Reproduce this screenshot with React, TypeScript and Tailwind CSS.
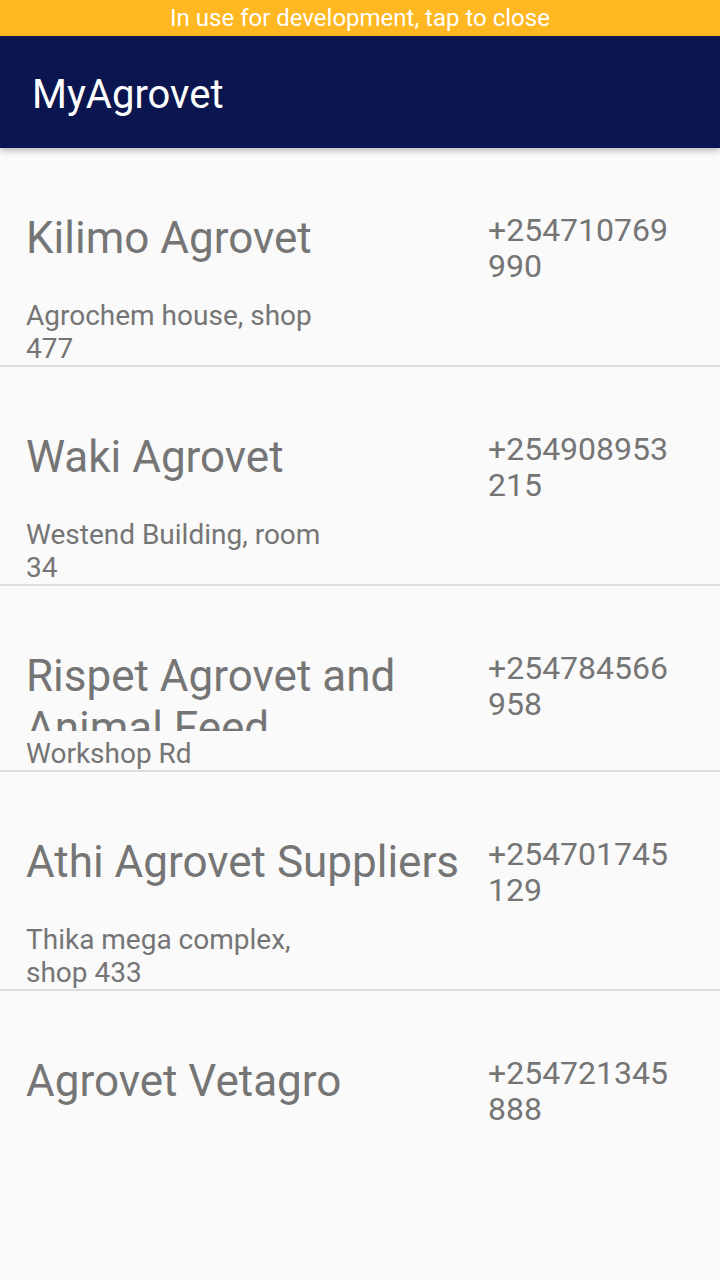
import React from 'react'

type Agrovet = {
  name: string
  address: string
  phone: string
}

const agrovets: Agrovet[] = [
  { name: 'Kilimo Agrovet', address: 'Agrochem house, shop 477', phone: '+254710769990' },
  { name: 'Waki Agrovet', address: 'Westend Building, room 34', phone: '+254908953215' },
  { name: 'Rispet Agrovet and Animal Feed', address: 'Workshop Rd', phone: '+254784566958' },
  { name: 'Athi Agrovet Suppliers', address: 'Thika mega complex, shop 433', phone: '+254701745129' },
  { name: 'Agrovet Vetagro', address: '', phone: '+254721345888' },
]

const AgrovetRow = ({ item, last }: { item: Agrovet; last: boolean }) => {
  return (
    <li
      className={
        last
          ? 'flex flex-row pt-[64px] text-[#757575]'
          : 'flex flex-row border-b-2 border-[#dedede] pt-[64px] text-[#757575]'
      }
    >
      <div className="flex flex-col w-[488px] pl-[26px]">
        <p className="h-[81px] overflow-hidden text-[44px] leading-[52px]">{item.name}</p>
        {item.address && (
          <p className="w-[310px] mt-[6px] text-[28px] leading-[33px]">{item.address}</p>
        )}
      </div>
      <p className="w-[190px] text-[32px] leading-[36px] break-all">{item.phone}</p>
    </li>
  )
}

const App = () => {
  return (
    <div className="min-h-screen bg-[#fafafa] font-['Roboto',sans-serif]">
      <div className="flex justify-center items-center h-[36px] bg-[#ffb822] text-white text-[24px]">
        In use for development, tap to close
      </div>
      <header className="relative z-10 flex items-center h-[112px] pl-[32px] pt-[6px] bg-[#0b1650] text-white text-[40px] shadow-[0_3px_6px_rgba(0,0,0,0.25)]">
        MyAgrovet
      </header>
      <ul className="flex flex-col">
        {agrovets.map((item, i) => (
          <AgrovetRow key={i} item={item} last={i === agrovets.length - 1} />
        ))}
      </ul>
    </div>
  )
}

export default App
